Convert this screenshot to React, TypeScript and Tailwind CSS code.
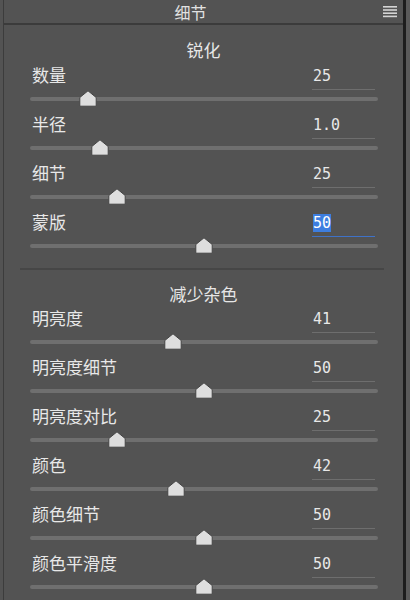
const font = { fontFamily: '"Noto Sans CJK SC", "Noto Sans", sans-serif' };

type Row = { label: string; value: string; pos: number; active?: boolean };

const sharpen: Row[] = [
  { label: '数量', value: '25', pos: 16.8 },
  { label: '半径', value: '1.0', pos: 20 },
  { label: '细节', value: '25', pos: 25 },
  { label: '蒙版', value: '50', pos: 50, active: true },
];

const noise: Row[] = [
  { label: '明亮度', value: '41', pos: 41 },
  { label: '明亮度细节', value: '50', pos: 50 },
  { label: '明亮度对比', value: '25', pos: 25 },
  { label: '颜色', value: '42', pos: 42 },
  { label: '颜色细节', value: '50', pos: 50 },
  { label: '颜色平滑度', value: '50', pos: 50 },
];

function Thumb() {
  return (
    <svg width="18" height="17" viewBox="0 0 18 17">
      <path d="M9 0.8 L17.2 7.5 L17.2 16.2 L0.8 16.2 L0.8 7.5 Z" fill="#dedede" stroke="#444" strokeWidth="1" />
    </svg>
  );
}

function SliderRow({ row }: { row: Row }) {
  return (
    <div className="h-[49px] flex flex-col">
      <div className="h-[24px] flex items-start justify-between pl-[28px] pr-[28px]">
        <span className="text-[17px] leading-[24px] text-[#e8e8e8]">{row.label}</span>
        <div
          className={`w-[63px] h-[27px] flex items-center border-b ${row.active ? 'border-[#3f72c8]' : 'border-[#6e6e6e]'}`}
        >
          <span
            className={`text-[15px] leading-[18px] ml-[1px] ${row.active ? 'bg-[#3d7ee0] text-white' : 'text-[#e8e8e8]'}`}
            style={{ fontFamily: '"DejaVu Sans Mono", monospace' }}
          >
            {row.value}
          </span>
        </div>
      </div>
      <div className="relative h-[25px] ml-[26px] w-[348px]">
        <div className="absolute left-0 right-0 top-[10px] h-[4px] rounded-full bg-[#6f6f6f]" />
        <div className="absolute top-[3px] -translate-x-1/2" style={{ left: `${row.pos}%` }}>
          <Thumb />
        </div>
      </div>
    </div>
  );
}

export default function App() {
  return (
    <div className="w-[410px] h-[600px] bg-[#535353] flex overflow-hidden" style={font}>
      <div className="ml-[3px] w-[400px] border-l border-[#3c3c3c] flex flex-col">
        {/* Header */}
        <div className="h-[25px] shrink-0 border-b-2 border-[#3b3b3b] flex items-center relative">
          <span className="flex-1 text-center pr-[26px] text-[16px] leading-[20px] text-[#e2e2e2]">细节</span>
          <svg className="absolute right-[6px] top-[6px]" width="14" height="12" viewBox="0 0 14 12">
            <rect x="0" y="0" width="14" height="1.6" fill="#d4d4d4" />
            <rect x="0" y="3.2" width="14" height="1.6" fill="#d4d4d4" />
            <rect x="0" y="6.4" width="14" height="1.6" fill="#d4d4d4" />
            <rect x="0" y="9.6" width="14" height="1.6" fill="#d4d4d4" />
          </svg>
        </div>

        {/* 锐化 */}
        <div className="h-[38px] flex items-end justify-center">
          <span className="text-[17px] leading-[24px] text-[#e6e6e6] pb-[1px]">锐化</span>
        </div>
        {sharpen.map((r) => (
          <SliderRow key={r.label} row={r} />
        ))}

        {/* Separator */}
        <div className="h-[10px]" />
        <div className="ml-[16px] w-[364px] h-[2px] bg-[#464646]" />

        {/* 减少杂色 */}
        <div className="h-[36px] flex items-end justify-center">
          <span className="text-[17px] leading-[24px] text-[#e6e6e6]">减少杂色</span>
        </div>
        {noise.map((r) => (
          <SliderRow key={r.label} row={r} />
        ))}
      </div>
      <div className="w-[3px] bg-[#1d1d1d]" />
      <div className="flex-1 bg-[#5a5a5a]" />
    </div>
  );
}
